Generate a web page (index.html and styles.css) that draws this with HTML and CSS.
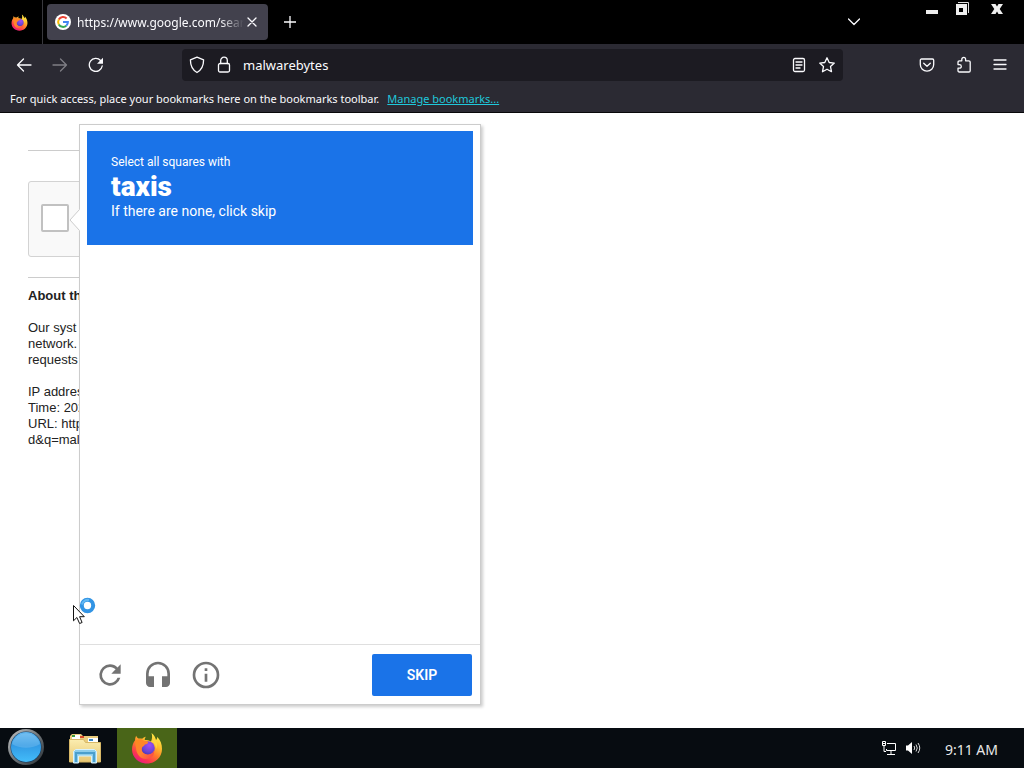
FILE: index.html
```
<!DOCTYPE html>
<html lang="en">
<head>
<meta charset="utf-8">
<meta name="viewport" content="width=device-width, initial-scale=1">
<title>malwarebytes</title>
<link rel="stylesheet" href="styles.css">
</head>
<body>
<svg class="defs" width="0" height="0" aria-hidden="true">
  <defs>
    <linearGradient id="flame" x1="0.85" y1="0.05" x2="0.25" y2="1">
      <stop offset="0" stop-color="#fff14a"/><stop offset="0.3" stop-color="#ffbd2e"/>
      <stop offset="0.55" stop-color="#ff7a2b"/><stop offset="0.8" stop-color="#fb3550"/><stop offset="1" stop-color="#e5158a"/>
    </linearGradient>
    <radialGradient id="globe" cx="0.6" cy="0.3" r="0.8">
      <stop offset="0" stop-color="#a04df5"/><stop offset="0.6" stop-color="#6a45d8"/><stop offset="1" stop-color="#4336a8"/>
    </radialGradient>
    <linearGradient id="fur" x1="0" y1="0" x2="1" y2="1">
      <stop offset="0" stop-color="#ff8a1e"/><stop offset="0.5" stop-color="#ff8330"/><stop offset="1" stop-color="#fb3f4a"/>
    </linearGradient>
    <linearGradient id="orb" x1="0" y1="0" x2="0" y2="1">
      <stop offset="0" stop-color="#62b7ef"/><stop offset="0.45" stop-color="#329ae4"/><stop offset="1" stop-color="#43bdfa"/>
    </linearGradient>
    <linearGradient id="rim" x1="0" y1="0" x2="1" y2="1">
      <stop offset="0" stop-color="#c4c4c4"/><stop offset="0.5" stop-color="#70777b"/><stop offset="1" stop-color="#252b30"/>
    </linearGradient>
    <linearGradient id="folder" x1="0" y1="0" x2="0" y2="1">
      <stop offset="0" stop-color="#fbedb0"/><stop offset="1" stop-color="#e7c772"/>
    </linearGradient>
    <symbol id="firefox" viewBox="0 0 32 32">
      <path fill="url(#flame)" d="M20.500 1C23 3 24.500 5.500 25 8c1-.8 1.300-2 1.200-3.200C29.500 8 31 12.500 31 17c0 8.300-6.600 14.500-15 14.500S1 25.300 1 17.500c0-4 1.300-7 3.100-9.300C4 6.600 4.400 5 5.300 3.700c.4 1.300 1.200 2.200 2.200 2.900 1.200-.3 2.500-.2 3.700.1 1-1.200 2.200-1.800 3.600-2-.7.900-1.100 2-1.100 3.200 2.500.2 4.300 0 6.300 1.600 1.200-2.300 1.500-5.500.5-8.500z"/>
      <circle cx="17" cy="16" r="6.800" fill="url(#globe)"/>
      <path fill="url(#fur)" d="M5 8.500C8 6.600 11 7 13 8.700c2 .3 3.500.4 4.200 1.500-.4 1.600-2 2-3.300 2.400-.4 1.200-1.700 2-2.700 2.600-1 2.300-.5 4.800 1.800 6.400 3.400 2.300 8.500 1 10-3 1 4.500-2.800 8.500-8 8.500C9.500 27.100 5 22 5 15.500c-.8-2.300-.8-4.800 0-7z"/>
      <path fill="#ffd540" d="M20 9.500c3.200 1.400 5.200 4 5 7.500 2.400-4.500.7-8.500-2.500-11 0 1.700-.9 2.900-2.500 3.500z"/>
    </symbol>
  </defs>
</svg>

<div class="desktop">
  <header class="browser">
    <div class="tabstrip">
      <button class="pinned" aria-label="Firefox View"><svg width="17" height="17"><use href="#firefox"/></svg></button>
      <div class="tab">
        <svg class="favicon" width="16" height="16" viewBox="0 0 16 16" aria-hidden="true">
          <circle cx="8" cy="8" r="8" fill="#fff"/>
          <path fill="none" stroke="#ea4335" stroke-width="2" d="M3.800 5.600a4.900 4.900 0 0 1 7.800-1.100"/>
          <path fill="none" stroke="#fbbc05" stroke-width="2" d="M3.800 5.600a4.900 4.900 0 0 0 0 4.800"/>
          <path fill="none" stroke="#34a853" stroke-width="2" d="M3.800 10.400a4.900 4.900 0 0 0 7.500 1.300"/>
          <path fill="none" stroke="#4285f4" stroke-width="2" d="M8 8h4.900a4.900 4.900 0 0 1-1.600 3.700"/>
        </svg>
        <span class="tab-title">https://www.google.com/searc</span>
        <button class="tab-close" aria-label="Close tab"><svg class="line" width="10" height="10" viewBox="0 0 10 10"><path d="M1 1l8 8M9 1L1 9"/></svg></button>
      </div>
      <button class="new-tab" aria-label="New tab"><svg class="line" width="12" height="12" viewBox="0 0 12 12"><path d="M6 0v12M0 6h12"/></svg></button>
      <button class="all-tabs" aria-label="List all tabs"><svg class="line" width="12" height="8" viewBox="0 0 12 8"><path d="M0.500 1L6 6.500 11.500 1"/></svg></button>
      <div class="window-buttons">
        <button aria-label="Minimize"><svg width="14" height="14" viewBox="0 0 14 14"><path fill="#eee" d="M1 8h12v4H1z"/></svg></button>
        <button class="restore" aria-label="Restore"><svg width="14" height="14" viewBox="0 0 14 14"><path fill="none" stroke="#ddd" d="M3 .5h10.500V11"/><path fill="#eee" fill-rule="evenodd" d="M1 2h11v11H1zM4 6v4h4V6z"/></svg></button>
        <button aria-label="Close"><svg width="14" height="14" viewBox="0 0 14 14"><path fill="#eee" d="M1 2h4.500L7 4.500 8.500 2H13L9.700 7l3.300 5H8.500L7 9.500 5.500 12H1l3.300-5z"/></svg></button>
      </div>
    </div>

    <div class="navbar">
      <div class="nav-left">
        <button aria-label="Back"><svg class="line" width="16" height="16" viewBox="0 0 16 16"><path d="M15 8H1.500M7.500 2L1.500 8l6 6"/></svg></button>
        <button class="dim" aria-label="Forward" disabled><svg class="line" width="16" height="16" viewBox="0 0 16 16"><path d="M1 8h13.500M8.500 2l6 6-6 6"/></svg></button>
        <button aria-label="Reload"><svg class="line" width="16" height="16" viewBox="0 0 16 16"><path d="M14.200 9A6.500 6.500 0 1 1 12.600 3.500"/><path fill="#fbfbfe" stroke="none" d="M15 .8v6H9z"/></svg></button>
      </div>
      <div class="urlbar">
        <button aria-label="Tracking protection"><svg class="line" width="16" height="18" viewBox="0 0 16 18"><path d="M8 1.200l6.600 2.600c0 5.500-1.600 10-6.600 12.700-5-2.700-6.600-7.200-6.600-12.700z"/></svg></button>
        <button aria-label="Site security"><svg class="line" width="14" height="18" viewBox="0 0 14 18"><rect x="1.500" y="7.500" width="11" height="8.500" rx="1.500"/><path d="M3.700 7.500V4.500a3.300 3.300 0 0 1 6.600 0v3"/></svg></button>
        <input type="text" value="malwarebytes" aria-label="Search or enter address">
        <button aria-label="Reader view"><svg class="line" width="14" height="16" viewBox="1 0 14 16"><rect x="2.500" y="1.500" width="11" height="13" rx="1.500"/><path d="M5 5h6M5 8h6M5 11h4"/></svg></button>
        <button aria-label="Bookmark this page"><svg class="line" width="18" height="18" viewBox="0 0 18 18"><path d="M9 1.800l2.200 4.700 5.100.6-3.800 3.500 1 5.100L9 13.200l-4.500 2.500 1-5.100-3.800-3.500 5.100-.6z"/></svg></button>
      </div>
      <div class="nav-right">
        <button aria-label="Save to Pocket"><svg class="line" width="16" height="16" viewBox="0 0 16 16"><path d="M2.500 2h11c.7 0 1.200.5 1.200 1.200v4.300a6.700 6.700 0 0 1-13.400 0V3.200C1.300 2.500 1.800 2 2.500 2z"/><path d="M4.700 6.200L8 9.300l3.300-3.100"/></svg></button>
        <button aria-label="Extensions"><svg class="line" width="16" height="18" viewBox="0 0 16 18"><path d="M2 6.500c0-1 .4-1.700 1.500-1.700h2.300V3.300a1.900 1.900 0 0 1 3.800 0v1.500h3.200c.8 0 1.400.5 1.400 1.300v8.600c0 .8-.5 1.300-1.300 1.300H3.300c-.8 0-1.300-.5-1.300-1.300v-2.500h1.500a1.800 1.800 0 0 0 0-3.600H2z"/></svg></button>
        <button aria-label="Open application menu"><svg class="line" width="14" height="14" viewBox="0 0 14 14"><path d="M1 2h12M1 6.500h12M1 11h12"/></svg></button>
      </div>
    </div>

    <div class="bookmarks">
      <span>For quick access, place your bookmarks here on the bookmarks toolbar.</span>
      <a href="#">Manage bookmarks...</a>
    </div>
  </header>

  <main class="page">
    <div class="sorry">
      <hr>
      <div class="anchor"><input type="checkbox" aria-label="I'm not a robot"></div>
      <hr>
      <div class="about">
        <b>About th</b>
        <p>Our syst<br>network.<br>requests</p>
        <p>IP addres<br>Time: 202<br>URL: http<br>d&amp;q=mal</p>
      </div>
    </div>

    <section class="challenge">
      <svg class="pointer" width="11" height="22" viewBox="0 0 11 22" aria-hidden="true"><path fill="#fff" d="M11 0v22L1 11z"/><path fill="none" stroke="#ccc" d="M10.500 0.500L1 11l9.500 10.500"/></svg>
      <div class="prompt">
        <div class="prompt-small">Select all squares with</div>
        <strong>taxis</strong>
        <div class="prompt-note">If there are none, click skip</div>
      </div>
      <div class="tiles"></div>
      <div class="controls">
        <button class="tool" aria-label="Get a new challenge"><svg width="32" height="32" viewBox="0 0 24 24"><path fill="#737373" d="M17.650 6.350A7.960 7.960 0 0 0 12 4a8 8 0 1 0 7.730 10h-2.080A6 6 0 1 1 12 6c1.660 0 3.140.69 4.220 1.780L13 11h7V4z"/></svg></button>
        <button class="tool" aria-label="Get an audio challenge"><svg width="32" height="32" viewBox="0 0 24 24"><path fill="#737373" d="M12 2a9 9 0 0 0-9 9v7c0 1.660 1.340 3 3 3h3v-8H5v-2a7 7 0 0 1 14 0v2h-4v8h3c1.660 0 3-1.340 3-3v-7a9 9 0 0 0-9-9z"/></svg></button>
        <button class="tool" aria-label="Help"><svg width="32" height="32" viewBox="0 0 24 24"><path fill="#737373" d="M11 17h2v-6h-2zm1-15a10 10 0 1 0 0 20 10 10 0 0 0 0-20zm0 18a8 8 0 1 1 0-16 8 8 0 0 1 0 16zM11 9h2V7h-2z"/></svg></button>
        <button class="skip">SKIP</button>
      </div>
    </section>

    <svg class="cursor" width="25" height="30" viewBox="0 0 25 30" aria-hidden="true">
      <circle cx="15.500" cy="9.500" r="5.700" fill="#fff" stroke="#3294e4" stroke-width="4"/>
      <path fill="none" stroke="#62b8f3" stroke-width="2" d="M10 8.500a6 6 0 0 1 7-4.500"/>
      <path fill="#fff" stroke="#111" d="M1.500 9.500v15.300l3.400-3.300 2.700 6 2.500-1-2.500-5.800h4.700z"/>
    </svg>
  </main>

  <footer class="taskbar">
    <button class="start" aria-label="Start"><svg width="38" height="38" viewBox="0 0 38 38"><circle cx="19" cy="18" r="18" fill="url(#rim)"/><circle cx="19" cy="18" r="15.500" fill="#153c60"/><circle cx="19" cy="18" r="15" fill="url(#orb)"/><path fill="#bfe4fb" opacity="0.22" d="M5 15a14.500 14.500 0 0 1 28 0c-8 5-20 5-28 0z"/></svg></button>
    <button class="task" aria-label="File Explorer"><svg width="34" height="32" viewBox="0 0 34 32">
      <path fill="#e9cc7d" d="M2 4l2-2h9l2 2h15v26H2z"/><path fill="#fff" d="M4 3h8v4H4zM20 6h10v5H20z"/>
      <path fill="#3e9a3b" d="M4 3h3v2H4z"/><path fill="#d84b2a" d="M12 4h4v2h-4z"/><path fill="#3989c9" d="M21 7h4v2h-4z"/>
      <path fill="url(#folder)" stroke="#d8b967" d="M1.500 7.500h14l2 3h15V30h-31z"/>
      <path fill="#8bcdec" stroke="#d9f2fc" d="M5.500 19.500l2-2h19l2 2V31h-5v-7h-13v7h-5z"/><path fill="none" stroke="#4a9fcd" stroke-width="2" d="M8 30v-9h18v9"/>
    </svg></button>
    <button class="task active" aria-label="Firefox"><svg width="32" height="32"><use href="#firefox"/></svg></button>
    <div class="tray">
      <svg width="16" height="16" viewBox="0 0 16 16" aria-label="Network"><path fill="none" stroke="#fff" d="M6 3.500h8.500v7H5.500V9M10 11v3M6 14.500h8M1.500 1.500h3v4h-3zM3 6v5.500h2M2 3.500h2"/></svg>
      <svg width="16" height="16" viewBox="0 0 16 16" aria-label="Volume"><path fill="#fff" d="M1 5.500h2L7 2v12l-4-3.500H1z"/><path fill="none" stroke="#ddd" d="M9 6q1.500 2 0 4M11 4.500q2.500 3.500 0 7M13 3q3.500 5 0 10"/></svg>
      <time>9:11 AM</time>
    </div>
  </footer>
</div>
</body>
</html>
```
FILE: styles.css
```
* { box-sizing: border-box; }
body { margin: 0; font-family: "Noto Sans", "Open Sans", sans-serif; color: #222; background: #fff; }
button { display: flex; align-items: center; justify-content: center; margin: 0; padding: 0; border: 0; background: none; color: inherit; font: inherit; }
svg { display: block; flex: none; }
.defs { position: absolute; }
.line { fill: none; stroke: #fbfbfe; stroke-width: 1.3; stroke-linecap: round; stroke-linejoin: round; }
.desktop { display: flex; flex-direction: column; min-height: 100vh; }

.browser { background: #2b2a33; color: #fbfbfe; border-bottom: 1px solid #08080a; }
.tabstrip { display: flex; align-items: center; height: 44px; background: #000; }
.pinned { width: 43px; height: 44px; padding-right: 3px; border-right: 1px solid #38383d; }
.tab { display: flex; align-items: center; width: 221px; height: 36px; margin-left: 4px; padding: 0 8px; border-radius: 4px; background: #42414d; }
.tab-title { flex: 1; min-width: 0; margin-left: 6px; overflow: hidden; white-space: nowrap; font-size: 12px; -webkit-mask-image: linear-gradient(to right, #000 86%, transparent); mask-image: linear-gradient(to right, #000 86%, transparent); }
.tab-close { width: 16px; height: 16px; }
.new-tab { width: 32px; height: 32px; margin-left: 6px; }
.all-tabs { width: 32px; height: 32px; margin-left: auto; }
.window-buttons { display: flex; align-self: flex-start; margin: 2px 20px 0 55px; }
.restore { margin: 0 21px 0 16px; }

.navbar { display: flex; align-items: center; height: 41px; }
.nav-left { display: flex; gap: 20px; width: 182px; padding-left: 16px; }
.dim { opacity: 0.4; }
.urlbar { display: flex; align-items: center; flex: 1; min-width: 0; height: 32px; padding: 0 7px; gap: 12px; border-radius: 4px; background: #1c1b22; }
.urlbar input { flex: 1; min-width: 0; padding: 0; border: 0; outline: 0; background: none; color: #fbfbfe; font: 13px "Noto Sans", "Open Sans", sans-serif; }
.nav-right { display: flex; align-items: center; justify-content: flex-end; gap: 21px; width: 181px; padding-right: 17px; }
.bookmarks { display: flex; gap: 8px; height: 27px; padding: 5px 10px; font-size: 11px; line-height: 18px; white-space: nowrap; }
.bookmarks a { color: #1fc8db; text-decoration: underline; }

.page { position: relative; flex: 1; min-height: 615px; background: #fff; }
.sorry { max-width: 428px; padding: 37px 0 0 28px; font: 13px/16px "Liberation Sans", Arial, sans-serif; }
.sorry hr { height: 1px; margin: 0; border: 0; background: #ccc; }
.anchor { display: flex; align-items: center; width: 304px; height: 76px; margin: 30px 0 20px; padding: 0 0 2px 12px; border: 1px solid #d3d3d3; border-radius: 3px; background: #f9f9f9; }
.anchor input { appearance: none; width: 28px; height: 28px; margin: 0; border: 2px solid #c1c1c1; border-radius: 2px; background: #fff; }
.about { padding-top: 10px; color: #222; }
.about p { margin: 16px 0; }

.challenge { position: absolute; top: 11px; left: 79px; width: 402px; border: 1px solid #ccc; background: #fff; box-shadow: 2px 2px 3px rgba(0, 0, 0, 0.2); font-family: Roboto, sans-serif; }
.pointer { position: absolute; top: 84px; left: -11px; }
.prompt { margin: 6px 7px 0; padding: 23px 24px; height: 114px; background: #1a73e8; color: #fff; }
.prompt-small { font-size: 12px; line-height: 17px; }
.prompt strong { display: block; font-size: 28px; font-weight: 900; line-height: 32px; }
.prompt-note { font-size: 14px; line-height: 17px; }
.tiles { height: 399px; }
.controls { display: flex; align-items: center; gap: 16px; padding: 9px 8px 8px 14px; border-top: 1px solid #dfdfdf; }
.tool { width: 32px; height: 32px; }
.skip { width: 100px; height: 42px; margin-left: auto; border-radius: 2px; background: #1a73e8; color: #fff; font-size: 14px; font-weight: 600; }
.cursor { position: absolute; top: 483px; left: 72px; }

.taskbar { display: flex; height: 40px; background: #070c11; color: #e8e8e8; }
.start { width: 52px; height: 40px; }
.task { width: 60px; height: 40px; margin-left: 3px; }
.task + .task { margin-left: 2px; }
.task.active { background: #496518; }
.tray { display: flex; align-items: center; gap: 8px; margin-left: auto; padding-right: 26px; font-size: 14px; }
.tray time { margin-left: 16px; padding-top: 2px; }
```
